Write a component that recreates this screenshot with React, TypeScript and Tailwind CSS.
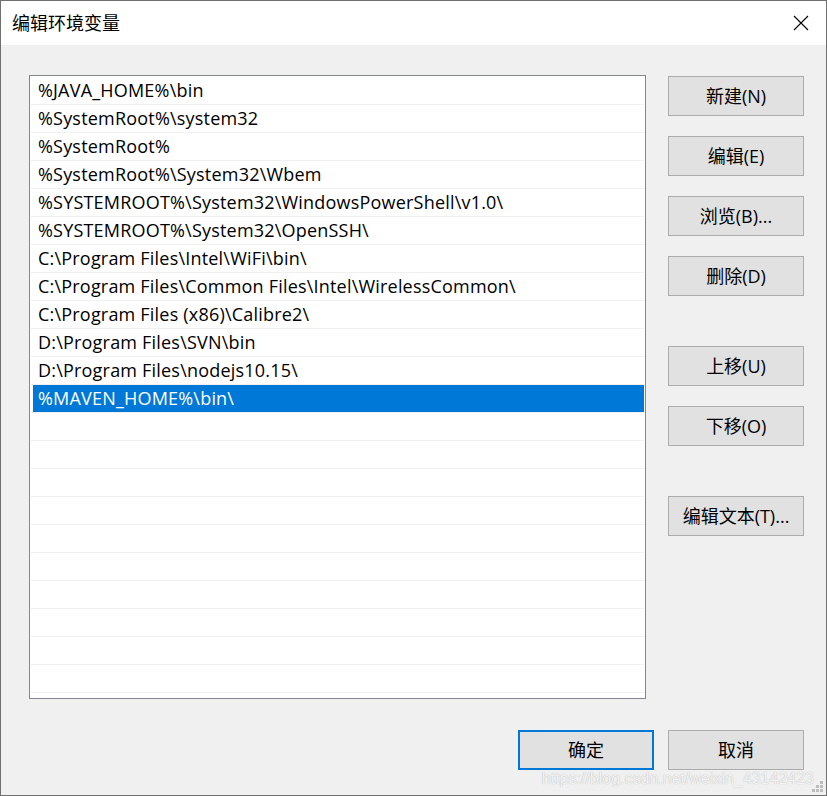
import React from "react";

const paths = [
  "%JAVA_HOME%\\bin",
  "%SystemRoot%\\system32",
  "%SystemRoot%",
  "%SystemRoot%\\System32\\Wbem",
  "%SYSTEMROOT%\\System32\\WindowsPowerShell\\v1.0\\",
  "%SYSTEMROOT%\\System32\\OpenSSH\\",
  "C:\\Program Files\\Intel\\WiFi\\bin\\",
  "C:\\Program Files\\Common Files\\Intel\\WirelessCommon\\",
  "C:\\Program Files (x86)\\Calibre2\\",
  "D:\\Program Files\\SVN\\bin",
  "D:\\Program Files\\nodejs10.15\\",
  "%MAVEN_HOME%\\bin\\",
];

const TOTAL_ROWS = 22;
const SELECTED = 11;

const font = { fontFamily: '"Open Sans", "Noto Sans CJK SC", sans-serif' };

const Btn = ({ label, primary = false }: { label: string; primary?: boolean }) => (
  <button
    className={
      primary
        ? "w-[136px] h-[40px] bg-[#e1e1e1] border-2 border-[#0078d7] text-[18px] text-black"
        : "w-[136px] h-[40px] bg-[#e1e1e1] border border-[#adadad] text-[18px] text-black"
    }
  >
    {label}
  </button>
);

export default function App() {
  const rows = Array.from({ length: TOTAL_ROWS }, (_, i) => paths[i] ?? "");

  return (
    <div
      className="relative w-[827px] h-[796px] border border-[#707070] bg-[#f0f0f0] flex flex-col overflow-hidden"
      style={font}
    >
      {/* title bar */}
      <div className="h-[44px] bg-white flex items-center justify-between pl-[11px] pr-[17px]">
        <span className="text-[18px] text-black">编辑环境变量</span>
        <svg width="16" height="16" viewBox="0 0 16 16" className="text-black">
          <path d="M1 1 L15 15 M15 1 L1 15" stroke="currentColor" strokeWidth="1.1" fill="none" />
        </svg>
      </div>

      {/* body */}
      <div className="flex pl-[28px] pt-[30px]">
        <div className="w-[617px] h-[624px] border border-[#828790] bg-white px-[1px] pt-[1px] overflow-hidden">
          {rows.map((p, i) => (
            <div key={i} className="h-[28px] border-b border-[#f0f0f0]">
              {i === SELECTED ? (
                <div className="h-[27px] ml-[2px] bg-[#0078d7] text-white text-[18px] tracking-[0.2px] leading-[27px] pl-[5px] whitespace-nowrap">
                  {p}
                </div>
              ) : (
                <div className="h-[27px] text-black text-[18px] tracking-[0.2px] leading-[27px] pl-[7px] whitespace-nowrap">
                  {p}
                </div>
              )}
            </div>
          ))}
        </div>

        <div className="ml-[22px] pt-[1px] flex flex-col">
          <Btn label="新建(N)" />
          <div className="mt-[20px]">
            <Btn label="编辑(E)" />
          </div>
          <div className="mt-[20px]">
            <Btn label="浏览(B)..." />
          </div>
          <div className="mt-[20px]">
            <Btn label="删除(D)" />
          </div>
          <div className="mt-[50px]">
            <Btn label="上移(U)" />
          </div>
          <div className="mt-[20px]">
            <Btn label="下移(O)" />
          </div>
          <div className="mt-[50px]">
            <Btn label="编辑文本(T)..." />
          </div>
        </div>
      </div>

      {/* footer buttons */}
      <div className="flex justify-end gap-[14px] pr-[22px] mt-[31px]">
        <Btn label="确定" primary />
        <Btn label="取消" />
      </div>

      {/* watermark */}
      <div
        className="absolute right-[12px] bottom-[4px] text-[16px] text-white/85 pointer-events-none"
        style={{ fontFamily: '"Liberation Sans", Arial, sans-serif', textShadow: "0 0 1px #a0a0a0" }}
      >
        https://blog.csdn.net/weixin_43142423
      </div>

      {/* resize grip */}
      <svg width="12" height="12" viewBox="0 0 12 12" className="absolute right-[2px] bottom-[2px]">
        <g fill="#bdbdbd">
          <rect x="8" y="0" width="3" height="3" />
          <rect x="4" y="4" width="3" height="3" />
          <rect x="8" y="4" width="3" height="3" />
          <rect x="0" y="8" width="3" height="3" />
          <rect x="4" y="8" width="3" height="3" />
          <rect x="8" y="8" width="3" height="3" />
        </g>
      </svg>
    </div>
  );
}
